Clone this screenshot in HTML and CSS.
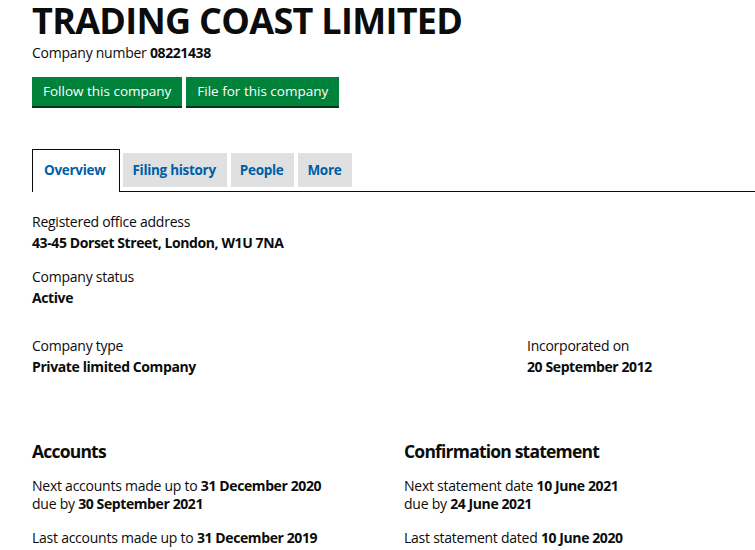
FILE: index.html
```html
<!DOCTYPE html>
<html>
<head>
<meta charset="utf-8">
<link rel="stylesheet" href="styles.css">
</head>
<body>
<main class="page">
  <h1 class="title">TRADING COAST LIMITED</h1>
  <p class="company-number">Company number <strong>08221438</strong></p>
  <div class="actions">
    <a class="button">Follow this company</a>
    <a class="button">File for this company</a>
  </div>

  <nav class="tabs">
    <a class="tab active">Overview</a>
    <a class="tab">Filing history</a>
    <a class="tab">People</a>
    <a class="tab">More</a>
  </nav>

  <dl class="field first">
    <dt>Registered office address</dt>
    <dd>43-45 Dorset Street, London, W1U 7NA</dd>
  </dl>
  <dl class="field">
    <dt>Company status</dt>
    <dd>Active</dd>
  </dl>

  <div class="row-thirds">
    <dl class="cell">
      <dt>Company type</dt>
      <dd>Private limited Company</dd>
    </dl>
    <dl class="cell">
      <dt>Incorporated on</dt>
      <dd>20 September 2012</dd>
    </dl>
  </div>

  <div class="row-halves">
    <section>
      <h2 class="heading">Accounts</h2>
      <p class="line">Next accounts made up to <strong>31 December 2020</strong><br>due by <strong>30 September 2021</strong></p>
      <p class="line">Last accounts made up to <strong>31 December 2019</strong></p>
    </section>
    <section>
      <h2 class="heading">Confirmation statement</h2>
      <p class="line">Next statement date <strong>10 June 2021</strong><br>due by <strong>24 June 2021</strong></p>
      <p class="line">Last statement dated <strong>10 June 2020</strong></p>
    </section>
  </div>
</main>
</body>
</html>
```

FILE: styles.css
```css
html, body {
  margin: 0;
  padding: 0;
  overflow: hidden;
  background: #ffffff;
}
body {
  font-family: "Open Sans", sans-serif;
  color: #0b0c0c;
  letter-spacing: -0.25px;
}
strong, dd {
  letter-spacing: -0.4px;
}
.page {
  width: 744px;
  padding-left: 32px;
}
.title {
  margin: 0 0 3px;
  padding-top: 2px;
  font-size: 36px;
  line-height: 38px;
  font-weight: 700;
  letter-spacing: -0.7px;
}
.company-number {
  margin: 0;
  font-size: 14px;
  line-height: 20px;
}
.company-number strong { font-weight: 700; }
.actions {
  display: flex;
  gap: 4px;
  margin-top: 14px;
}
.button {
  display: block;
  background: #00823b;
  color: #ffffff;
  font-size: 13.5px;
  letter-spacing: 0;
  line-height: 29px;
  height: 29px;
  padding: 0 11px;
  box-shadow: 0 2px 0 #003618;
}
.tabs {
  display: flex;
  align-items: flex-end;
  gap: 3px;
  margin-top: 43px;
  border-bottom: 1px solid #0b0c0c;
  margin-right: -40px;
}
.tab {
  display: block;
  background: #dee0e2;
  color: #005ea5;
  font-weight: 700;
  font-size: 13.5px;
  letter-spacing: -0.3px;
  line-height: 34px;
  height: 34px;
  padding: 0 11px 0 9px;
  margin-bottom: 4px;
}
.tab + .tab + .tab { margin-left: 1px; }
.tab.active {
  background: #ffffff;
  border: 1px solid #0b0c0c;
  border-bottom: none;
  box-sizing: border-box;
  height: 43px;
  line-height: 41px;
  padding: 0 14px 0 11px;
  margin-bottom: -1px;
}
.field, .cell {
  margin: 0;
}
.field dt, .cell dt {
  font-size: 14px;
  line-height: 20px;
}
.field dd, .cell dd {
  margin: 1px 0 0;
  font-weight: 700;
  font-size: 14px;
  line-height: 20px;
}
.field.first { margin-top: 20px; }
.field + .field { margin-top: 14px; }
.row-thirds {
  display: grid;
  grid-template-columns: 495px 1fr;
  margin-top: 28px;
}
.row-halves {
  display: grid;
  grid-template-columns: 372px 1fr;
  margin-top: 62px;
}
.heading {
  margin: 0;
  font-size: 17.5px;
  line-height: 24px;
  font-weight: 700;
  letter-spacing: -0.8px;
}
.line {
  margin: 14px 0 0;
  font-size: 14px;
  line-height: 18px;
}
.line + .line { margin-top: 16px; }
```
